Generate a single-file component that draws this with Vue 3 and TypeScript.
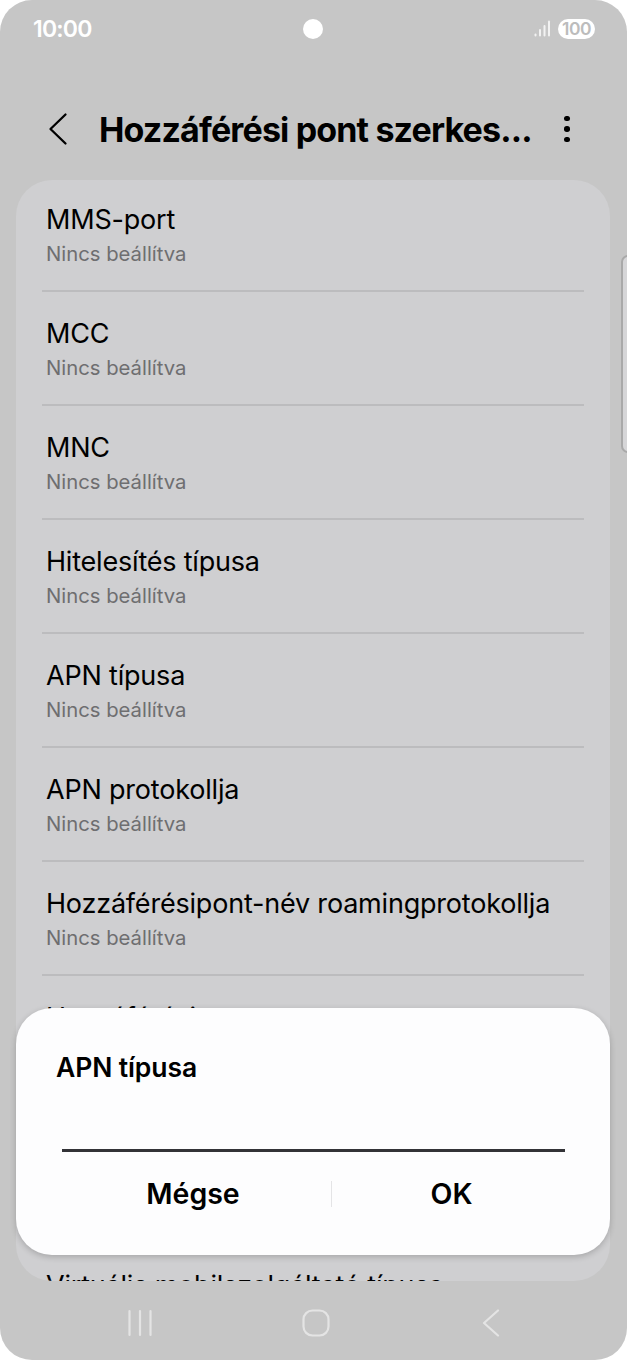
<script setup lang="ts">
const rows = [
  { title: 'MMS-port', sub: 'Nincs beállítva' },
  { title: 'MCC', sub: 'Nincs beállítva' },
  { title: 'MNC', sub: 'Nincs beállítva' },
  { title: 'Hitelesítés típusa', sub: 'Nincs beállítva' },
  { title: 'APN típusa', sub: 'Nincs beállítva' },
  { title: 'APN protokollja', sub: 'Nincs beállítva' },
  { title: 'Hozzáférésipont-név roamingprotokollja', sub: 'Nincs beállítva' },
]
</script>

<template>
  <div class="frame">
    <div class="status">
      <span class="time">10:00</span>
      <span class="camera"></span>
      <div class="status-right">
        <svg class="signal" width="17" height="18" viewBox="0 0 17 18">
          <rect x="0.5" y="13.5" width="2" height="3" rx="1" fill="#f2f2f2" />
          <rect x="5" y="9" width="2" height="7.5" rx="1" fill="#f2f2f2" />
          <rect x="9.5" y="5" width="2" height="11.5" rx="1" fill="#f2f2f2" />
          <rect x="14" y="0.5" width="2" height="16" rx="1" fill="#f2f2f2" />
        </svg>
        <span class="battery">100</span>
      </div>
    </div>

    <header class="appbar">
      <svg class="back" width="24" height="34" viewBox="0 0 24 34">
        <path d="M19.5 2.5 L4.5 17 L19.5 31.5" fill="none" stroke="#000" stroke-width="2.3" stroke-linecap="round" stroke-linejoin="round" />
      </svg>
      <h1 class="heading">Hozzáférési pont szerkes...</h1>
      <div class="more"><i></i><i></i><i></i></div>
    </header>

    <main class="card">
      <div class="list">
        <div v-for="r in rows" :key="r.title" class="row">
          <div class="row-title">{{ r.title }}</div>
          <div class="row-sub">{{ r.sub }}</div>
        </div>
        <div class="row row-tall">
          <div class="row-title">Hozzáférési pont neve</div>
        </div>
        <div class="row last">
          <div class="row-title">Virtuális mobilszolgáltató típusa</div>
        </div>
      </div>
    </main>

    <nav class="navbar">
      <svg width="26" height="28" viewBox="0 0 26 28">
        <path d="M2.5 2V26M13 2V26M23.5 2V26" fill="none" stroke="#e4e4e4" stroke-width="2.2" stroke-linecap="round" />
      </svg>
      <svg width="28" height="28" viewBox="0 0 28 28">
        <rect x="1.5" y="1.5" width="25" height="25" rx="9" fill="none" stroke="#e4e4e4" stroke-width="2.2" />
      </svg>
      <svg width="18" height="28" viewBox="0 0 18 28">
        <path d="M16 1.5 L2 14 L16 26.5" fill="none" stroke="#e4e4e4" stroke-width="2.2" stroke-linecap="round" stroke-linejoin="round" />
      </svg>
    </nav>

    <div class="scroll-handle"></div>

    <section class="dialog">
      <div class="dialog-title">APN típusa</div>
      <div class="input-line"></div>
      <div class="actions">
        <button class="action action-left">Mégse</button>
        <span class="action-sep"></span>
        <button class="action action-right">OK</button>
      </div>
    </section>
  </div>
</template>

<style>
html, body { margin: 0; background: #fff; }
</style>

<style scoped>
.frame {
  position: relative;
  width: 627px;
  height: 1360px;
  box-sizing: border-box;
  border-radius: 32px;
  overflow: hidden;
  background: #c6c6c6;
  font-family: Inter, "Liberation Sans", sans-serif;
  color: #000;
  display: flex;
  flex-direction: column;
}
.status {
  height: 58px;
  padding: 0 32px 0 33px;
  display: flex;
  align-items: center;
  justify-content: space-between;
  position: relative;
  flex: none;
}
.time {
  color: #fff;
  font-size: 23px;
  font-weight: 600;
  letter-spacing: -0.8px;
}
.camera {
  position: absolute;
  left: 303px;
  top: 19px;
  width: 20px;
  height: 20px;
  border-radius: 50%;
  background: #fff;
}
.status-right {
  display: flex;
  align-items: center;
  gap: 7px;
}
.signal { display: block; }
.battery {
  width: 37px;
  height: 20px;
  border-radius: 10px;
  background: #fff;
  color: #bcbcbc;
  font-size: 17.5px;
  font-weight: 600;
  line-height: 20px;
  text-align: center;
  letter-spacing: -0.5px;
}
.appbar {
  height: 122px;
  flex: none;
  display: flex;
  align-items: center;
  padding: 20px 0 0 46px;
  box-sizing: border-box;
}
.back { display: block; flex: none; }
.heading {
  margin: 0 0 0 29px;
  font-size: 34px;
  font-weight: 700;
  letter-spacing: -0.85px;
  white-space: nowrap;
  flex: none;
  width: 464px;
}
.more {
  display: flex;
  flex-direction: column;
  gap: 5px;
  align-items: center;
  width: 8px;
}
.more i {
  width: 5.5px;
  height: 5.5px;
  border-radius: 50%;
  background: #000;
  display: block;
}
.card {
  margin: 0 17px 0 16px;
  height: 1101px;
  flex: none;
  background: #cfcfd1;
  border-radius: 36px;
  overflow: hidden;
  padding: 0 26px;
  box-sizing: border-box;
}
.list { margin-top: -2px; }
.row {
  height: 114px;
  box-sizing: border-box;
  border-bottom: 2px solid #bcbcbe;
  padding: 25px 4px 0;
}
.row-tall { height: 268px; }
.last { border-bottom: 0; }
.row-title {
  font-size: 27px;
  line-height: 33px;
  white-space: nowrap;
  letter-spacing: -0.2px;
}
.row-sub {
  margin-top: 4.5px;
  font-size: 20.3px;
  line-height: 25px;
  color: #6e6e70;
}
.navbar {
  flex: 1;
  display: flex;
  align-items: flex-start;
  padding-top: 28px;
  position: relative;
  padding-left: 127px;
  gap: 149px;
}
.navbar svg:nth-child(3) { margin-left: 3px; }
.scroll-handle {
  position: absolute;
  right: -8px;
  top: 255px;
  width: 14px;
  height: 198px;
  box-sizing: border-box;
  border: 2px solid #a9a9a9;
  border-radius: 8px;
  background: #d6d6d8;
}
.dialog {
  position: absolute;
  left: 16px;
  top: 1008px;
  width: 594px;
  height: 247px;
  box-sizing: border-box;
  background: #fdfdfe;
  border-radius: 36px;
  box-shadow: 0 2px 6px rgba(0, 0, 0, 0.2);
  padding: 0 39px;
}
.dialog-title {
  margin: 44px 0 0 1px;
  font-size: 26.5px;
  line-height: 31px;
  font-weight: 600;
  letter-spacing: -0.1px;
}
.input-line {
  margin: 66px 0 0 7px;
  height: 3px;
  background: #333337;
  width: 503px;
}
.actions {
  display: flex;
  align-items: center;
  margin-top: 29px;
  height: 26px;
}
.action {
  background: none;
  border: 0;
  padding: 0;
  font: inherit;
  font-size: 28.5px;
  font-weight: 600;
  color: #000;
  line-height: 26px;
}
.action-left { width: 276px; }
.action-right { flex: 1; }
.action-sep {
  width: 1px;
  height: 26px;
  background: #e4e4e6;
}
</style>
